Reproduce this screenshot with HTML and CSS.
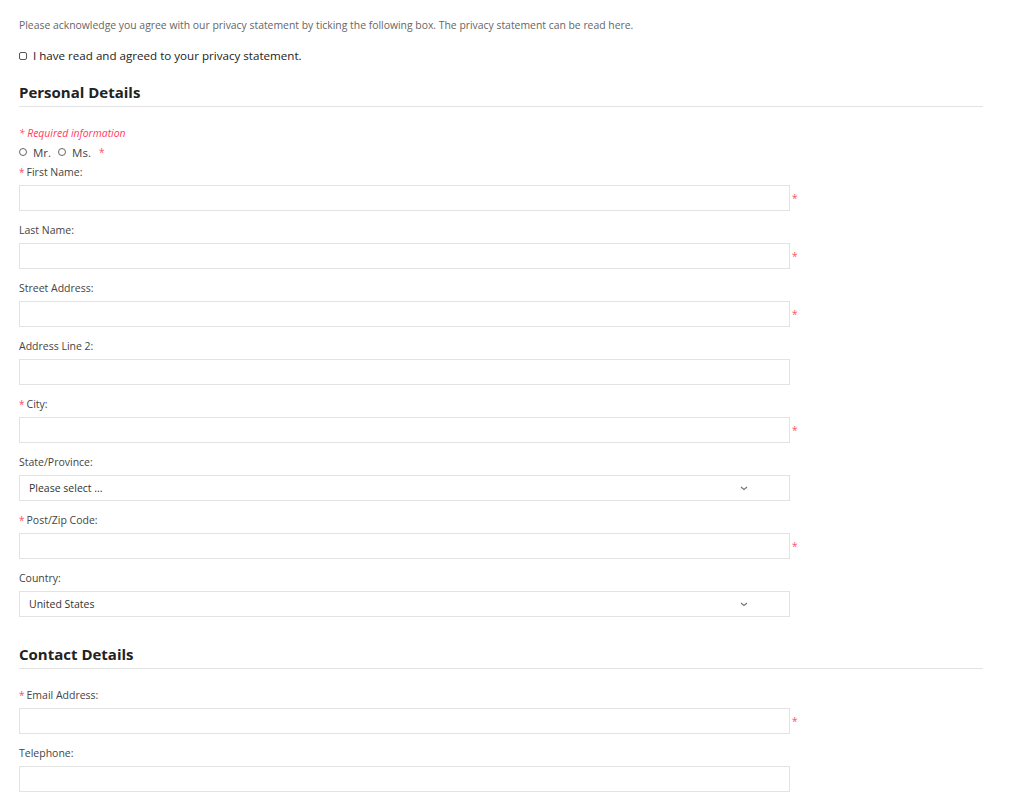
FILE: index.html
```html
<!DOCTYPE html>
<html>
<head>
<meta charset="utf-8">
<link rel="stylesheet" href="styles.css">
</head>
<body>
<div class="page">
  <p class="intro">Please acknowledge you agree with our privacy statement by ticking the following box. The privacy statement can be read here.</p>
  <label class="agree"><span class="box"></span><span>I have read and agreed to your privacy statement.</span></label>

  <h2 class="section">Personal Details</h2>
  <p class="required"><span class="ast">*</span> Required information</p>
  <div class="titles">
    <span class="radio"></span><span class="rlabel">Mr.</span>
    <span class="radio"></span><span class="rlabel">Ms.</span>
    <span class="ast big">*</span>
  </div>

  <div class="field">
    <div class="label"><span class="ast">*</span>First Name:</div>
    <div class="row"><div class="input"></div><span class="ast side">*</span></div>
  </div>
  <div class="field">
    <div class="label">Last Name:</div>
    <div class="row"><div class="input"></div><span class="ast side">*</span></div>
  </div>
  <div class="field">
    <div class="label">Street Address:</div>
    <div class="row"><div class="input"></div><span class="ast side">*</span></div>
  </div>
  <div class="field">
    <div class="label">Address Line 2:</div>
    <div class="row"><div class="input"></div></div>
  </div>
  <div class="field">
    <div class="label"><span class="ast">*</span>City:</div>
    <div class="row"><div class="input"></div><span class="ast side">*</span></div>
  </div>
  <div class="field">
    <div class="label">State/Province:</div>
    <div class="row"><div class="input select"><span>Please select ...</span><svg class="chev" width="8" height="5" viewBox="0 0 8 5"><path d="M1 1 L4 3.5 L7 1" fill="none" stroke="#777" stroke-width="1.2"/></svg></div></div>
  </div>
  <div class="field">
    <div class="label"><span class="ast">*</span>Post/Zip Code:</div>
    <div class="row"><div class="input"></div><span class="ast side">*</span></div>
  </div>
  <div class="field">
    <div class="label">Country:</div>
    <div class="row"><div class="input select"><span>United States</span><svg class="chev" width="8" height="5" viewBox="0 0 8 5"><path d="M1 1 L4 3.5 L7 1" fill="none" stroke="#777" stroke-width="1.2"/></svg></div></div>
  </div>

  <h2 class="section contact">Contact Details</h2>
  <div class="field first">
    <div class="label"><span class="ast">*</span>Email Address:</div>
    <div class="row"><div class="input"></div><span class="ast side">*</span></div>
  </div>
  <div class="field">
    <div class="label">Telephone:</div>
    <div class="row"><div class="input"></div></div>
  </div>
</div>
</body>
</html>
```
FILE: styles.css
```css
* { box-sizing: border-box; }
html, body { margin: 0; padding: 0; background: #fff; }
body { font-family: "Open Sans", "Noto Sans", sans-serif; color: #444; }
.page { width: 964px; margin-left: 19px; padding-top: 17px; }
.intro { margin: 0; font-size: 10.4px; line-height: 16px; color: #666; }
.agree { display: flex; align-items: center; margin-top: 15px; font-size: 11.6px; line-height: 16px; color: #222; }
.box { width: 8px; height: 8px; border: 1px solid #555; border-radius: 2px; margin-right: 6px; }
.section { margin: 18px 0 0; font-size: 15px; line-height: 20px; font-weight: 700; color: #222; padding-bottom: 4px; border-bottom: 1px solid #e3e3e3; }
.required { margin: 18px 0 0; font-size: 10.4px; line-height: 16px; font-style: italic; color: #ff3b5c; }
.ast { color: #ff4d5e; font-size: 10px; margin-right: 2px; }
.required .ast { margin-right: 0; }
.titles { display: flex; align-items: center; height: 18px; font-size: 11.5px; color: #444; margin-top: 2px; }
.radio { width: 8px; height: 8px; border: 1px solid #666; border-radius: 50%; margin-right: 6px; }
.rlabel { margin-right: 7px; }
.ast.big { margin-left: 1px; }
.field { margin-top: 0; margin-bottom: 11px; }
.titles + .field { margin-top: 3px; }
.label { font-size: 10.5px; line-height: 16px; height: 16px; margin-bottom: 5px; color: #444; }
.row { display: flex; align-items: center; }
.input { width: 771px; height: 26px; border: 1px solid #e3e3e3; background: #fff; }
.side { margin-left: 2px; margin-top: 0; font-size: 10px; }
.select { display: flex; align-items: center; justify-content: space-between; padding: 0 41px 0 9px; font-size: 10.5px; color: #333; }
.chev { display: block; }
.section.contact { margin-top: 27px; }
.field.first { margin-top: 18px; }
```
